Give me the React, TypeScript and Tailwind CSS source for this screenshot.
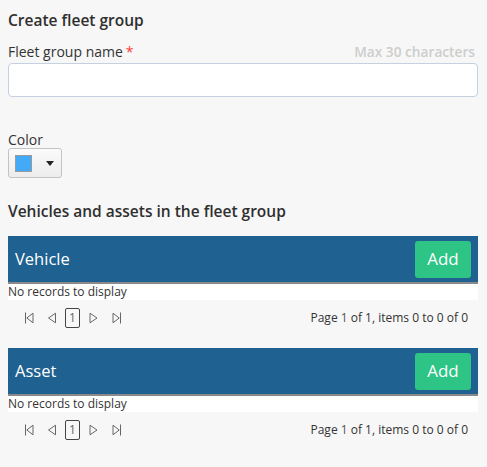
import React from "react";

const First = () => (
  <svg width="10" height="12" viewBox="0 0 10 12" fill="none" stroke="#666" strokeWidth="1">
    <path d="M1.5 0.5v11" />
    <path d="M9 1.2L2.8 6L9 10.8Z" />
  </svg>
);
const Prev = () => (
  <svg width="10" height="12" viewBox="0 0 10 12" fill="none" stroke="#666" strokeWidth="1">
    <path d="M8.5 1.2L1.5 6L8.5 10.8Z" />
  </svg>
);
const Next = () => (
  <svg width="10" height="12" viewBox="0 0 10 12" fill="none" stroke="#666" strokeWidth="1">
    <path d="M1 1.2L8 6L1 10.8Z" />
  </svg>
);
const Last = () => (
  <svg width="11" height="12" viewBox="0 0 11 12" fill="none" stroke="#666" strokeWidth="1">
    <path d="M1 1.2L7.2 6L1 10.8Z" />
    <path d="M8.5 0.5v11" />
  </svg>
);

function Grid({ title }: { title: string }) {
  return (
    <div>
      <div className="flex h-[48px] items-center justify-between border-b-2 border-[#8a8a8a] bg-[#1f6190] pl-[7px] pr-[7px]">
        <span className="text-[16.5px] text-white">{title}</span>
        <button className="flex h-[37px] w-[56px] items-center justify-center rounded-[3px] bg-[#2dc486] text-[17px] text-white">
          Add
        </button>
      </div>
      <div className="flex h-[16px] items-center bg-white text-[12px] leading-none text-[#333]">
        No records to display
      </div>
      <div className="flex h-[35px] items-center justify-between pl-[16px] pr-[10px]">
        <div className="flex items-center">
          <span className="flex w-[23px] justify-start"><First /></span>
          <span className="flex w-[18px] justify-start"><Prev /></span>
          <span className="flex h-[20px] w-[15px] items-center justify-center rounded-[2px] border border-[#444] text-[12px] text-[#666]">1</span>
          <span className="ml-[9px] flex w-[23px] justify-start"><Next /></span>
          <span className="flex w-[12px] justify-start"><Last /></span>
        </div>
        <span className="text-[12px] text-[#333]">
          Page <span className="text-[#555]">1</span> of 1, items 0 to 0 of 0
        </span>
      </div>
    </div>
  );
}

export default function App() {
  return (
    <div
      className="min-h-[467px] w-full bg-[#f7f7f7] px-[8px] pr-[9px] pt-[6px] text-[#333]"
      style={{ fontFamily: '"Open Sans", "Noto Sans", sans-serif' }}
    >
      <h1 className="text-[15.5px] font-semibold leading-[28px] text-[#2f2f2f]">Create fleet group</h1>
      <div className="mt-[8px] flex items-end justify-between">
        <label className="text-[14px] leading-[20px] text-[#333]">
          Fleet group name<span className="ml-[3px] text-[#ff3b3b]">*</span>
        </label>
        <span className="mr-[3px] text-[13.7px] font-semibold leading-[20px] text-[#cdcdcd]">Max 30 characters</span>
      </div>
      <input className="mt-[1px] block h-[34px] w-full rounded-[4px] border border-[#c6d1e0] bg-white" />
      <div className="mt-[35px] text-[14px] leading-[16px] text-[#333]">Color</div>
      <div className="flex h-[30px] w-[54px] items-center rounded-[3px] border border-[#c3c3c3] bg-gradient-to-b from-[#fbfbfb] to-[#ececec] pl-[6px]">
        <span className="h-[17px] w-[17px] border border-[#9a9a9a] bg-[#42aaf6]" />
        <svg className="ml-[14px]" width="8" height="5" viewBox="0 0 8 5">
          <path d="M0 0H8L4 5Z" fill="#222" />
        </svg>
      </div>
      <h2 className="mt-[19px] text-[15.5px] font-semibold leading-[28px] text-[#2f2f2f]">
        Vehicles and assets in the fleet group
      </h2>
      <div className="mt-[11px]">
        <Grid title="Vehicle" />
      </div>
      <div className="mt-[13px]">
        <Grid title="Asset" />
      </div>
    </div>
  );
}
